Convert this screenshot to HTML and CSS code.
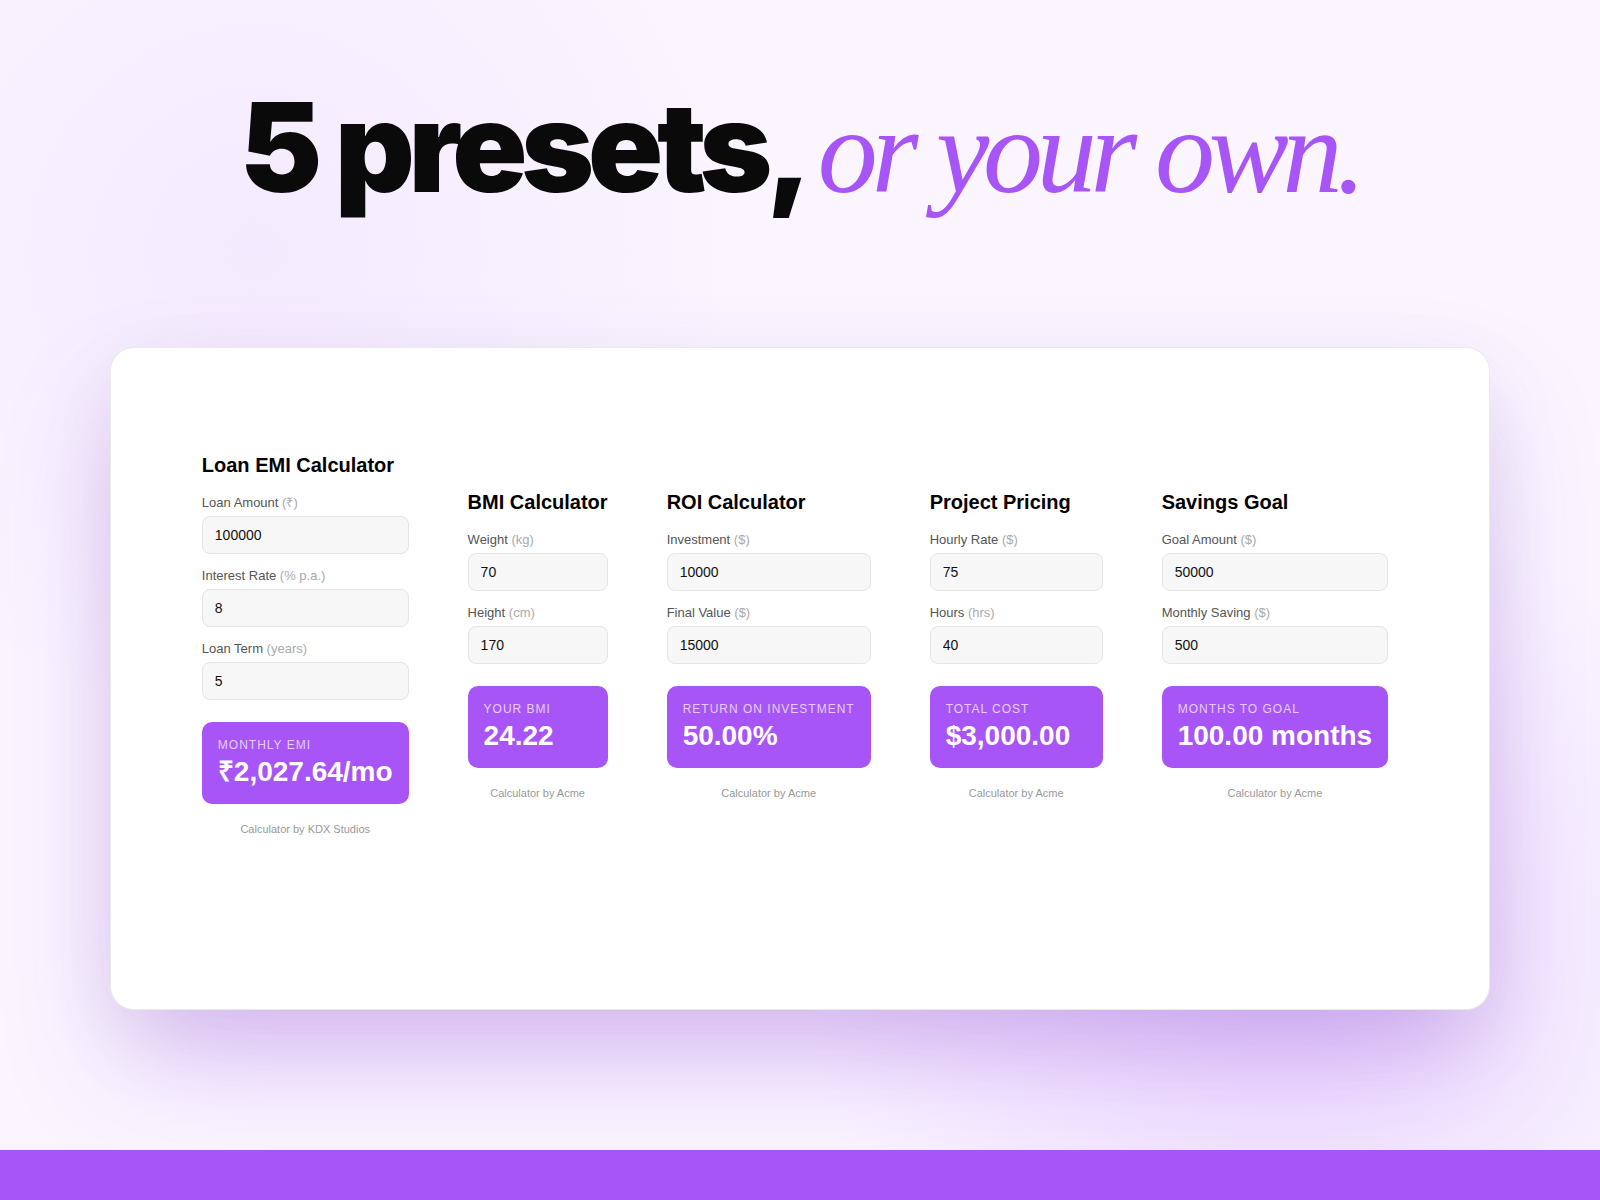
FILE: index.html
```html
<!DOCTYPE html>
<html lang="en">
  <head>
    <meta charset="UTF-8" />
    <meta name="viewport" content="width=device-width, initial-scale=1.0" />
    <title>Calculator presets</title>
    <link rel="stylesheet" href="styles.css">
  </head>
  <body>
    <header class="hero">
      <h1>5 presets, <em>or your own.</em></h1>
    </header>

    <main class="showcase">
      <form class="calculator">
        <h2>Loan EMI Calculator</h2>
        <div class="form-group">
          <label for="loan-amount">Loan Amount <span class="unit">(₹)</span></label>
          <input type="number" id="loan-amount" name="amount" value="100000" />
        </div>
        <div class="form-group">
          <label for="loan-rate">Interest Rate <span class="unit">(% p.a.)</span></label>
          <input type="number" id="loan-rate" name="rate" value="8" />
        </div>
        <div class="form-group">
          <label for="loan-term">Loan Term <span class="unit">(years)</span></label>
          <input type="number" id="loan-term" name="term" value="5" />
        </div>
        <div class="result">
          <span class="result-label">Monthly EMI</span>
          <output class="result-value" for="loan-amount loan-rate loan-term">₹2,027.64/mo</output>
        </div>
        <p class="credit">Calculator by KDX Studios</p>
      </form>

      <form class="calculator">
        <h2>BMI Calculator</h2>
        <div class="form-group">
          <label for="bmi-weight">Weight <span class="unit">(kg)</span></label>
          <input type="number" id="bmi-weight" name="weight" value="70" />
        </div>
        <div class="form-group">
          <label for="bmi-height">Height <span class="unit">(cm)</span></label>
          <input type="number" id="bmi-height" name="height" value="170" />
        </div>
        <div class="result">
          <span class="result-label">Your BMI</span>
          <output class="result-value" for="bmi-weight bmi-height">24.22</output>
        </div>
        <p class="credit">Calculator by Acme</p>
      </form>

      <form class="calculator">
        <h2>ROI Calculator</h2>
        <div class="form-group">
          <label for="roi-investment">Investment <span class="unit">($)</span></label>
          <input type="number" id="roi-investment" name="investment" value="10000" />
        </div>
        <div class="form-group">
          <label for="roi-final">Final Value <span class="unit">($)</span></label>
          <input type="number" id="roi-final" name="final" value="15000" />
        </div>
        <div class="result">
          <span class="result-label">Return on Investment</span>
          <output class="result-value" for="roi-investment roi-final">50.00%</output>
        </div>
        <p class="credit">Calculator by Acme</p>
      </form>

      <form class="calculator calculator-pricing">
        <h2>Project Pricing</h2>
        <div class="form-group">
          <label for="price-rate">Hourly Rate <span class="unit">($)</span></label>
          <input type="number" id="price-rate" name="rate" value="75" />
        </div>
        <div class="form-group">
          <label for="price-hours">Hours <span class="unit">(hrs)</span></label>
          <input type="number" id="price-hours" name="hours" value="40" />
        </div>
        <div class="result">
          <span class="result-label">Total Cost</span>
          <output class="result-value" for="price-rate price-hours">$3,000.00</output>
        </div>
        <p class="credit">Calculator by Acme</p>
      </form>

      <form class="calculator">
        <h2>Savings Goal</h2>
        <div class="form-group">
          <label for="goal-amount">Goal Amount <span class="unit">($)</span></label>
          <input type="number" id="goal-amount" name="amount" value="50000" />
        </div>
        <div class="form-group">
          <label for="goal-saving">Monthly Saving <span class="unit">($)</span></label>
          <input type="number" id="goal-saving" name="saving" value="500" />
        </div>
        <div class="result">
          <span class="result-label">Months to Goal</span>
          <output class="result-value" for="goal-amount goal-saving">100.00 months</output>
        </div>
        <p class="credit">Calculator by Acme</p>
      </form>
    </main>

    <footer class="bottom-bar"></footer>
  </body>
</html>
```
FILE: styles.css
```css
/* Global styles */
* {
  box-sizing: border-box;
  margin: 0;
  padding: 0;
}

body {
  display: flex;
  flex-direction: column;
  min-height: 100vh;
  font-family: "Liberation Sans", Arial, sans-serif;
  background:
    radial-gradient(circle at 16% 21%, rgba(168, 85, 247, 0.07), transparent 480px),
    radial-gradient(circle at 80% 80%, rgba(168, 85, 247, 0.18), transparent 480px),
    #faf5ff;
}

/* Headline */
.hero {
  padding: 67px 24px 120px;
  text-align: center;
}

.hero h1 {
  font-family: Inter, sans-serif;
  font-size: 124px;
  font-weight: 900;
  line-height: 160px;
  letter-spacing: -0.05em;
  color: #0a0a0a;
}

.hero em {
  font-family: "Liberation Serif", "Times New Roman", serif;
  font-size: 120px;
  font-weight: 400;
  font-style: italic;
  line-height: 1;
  color: #a855f7;
}

/* Card with the calculators */
.showcase {
  flex: 1;
  display: flex;
  flex-wrap: wrap;
  justify-content: center;
  align-items: center;
  gap: 59px;
  margin: 0 110px 140px;
  padding: 24px 34px 92px 24px;
  background: white;
  border: 1px solid rgba(0, 0, 0, 0.08);
  border-radius: 24px;
  box-shadow:
    0 60px 120px -20px rgba(168, 85, 247, 0.34),
    0 30px 80px rgba(0, 0, 0, 0.08);
}

.calculator-pricing {
  min-width: 173px;
}

.calculator h2 {
  margin-bottom: 18px;
  font-size: 20px;
  line-height: 24px;
  color: #000;
}

.form-group {
  margin-bottom: 14px;
}

.form-group label {
  display: block;
  margin-bottom: 5px;
  font-size: 13px;
  line-height: 16px;
  color: #555;
}

.unit {
  color: #aaa;
}

.form-group input {
  display: block;
  width: 0;
  min-width: 100%;
  height: 38px;
  padding: 0 12px;
  border: 1px solid #e5e5e5;
  border-radius: 8px;
  background: #f7f7f7;
  font-family: inherit;
  font-size: 14px;
  color: #111;
  appearance: textfield;
}

.result {
  margin-top: 22px;
  padding: 14px 16px;
  border-radius: 10px;
  background: #a855f7;
  color: white;
}

.result-label {
  display: block;
  font-size: 12px;
  line-height: 18px;
  letter-spacing: 1px;
  text-transform: uppercase;
  opacity: 0.7;
}

.result-value {
  display: block;
  font-size: 28px;
  font-weight: 700;
  line-height: 36px;
}

.credit {
  margin-top: 18px;
  font-size: 11px;
  line-height: 14px;
  text-align: center;
  color: #999;
}

.bottom-bar {
  height: 50px;
  background: #a855f7;
}
```
